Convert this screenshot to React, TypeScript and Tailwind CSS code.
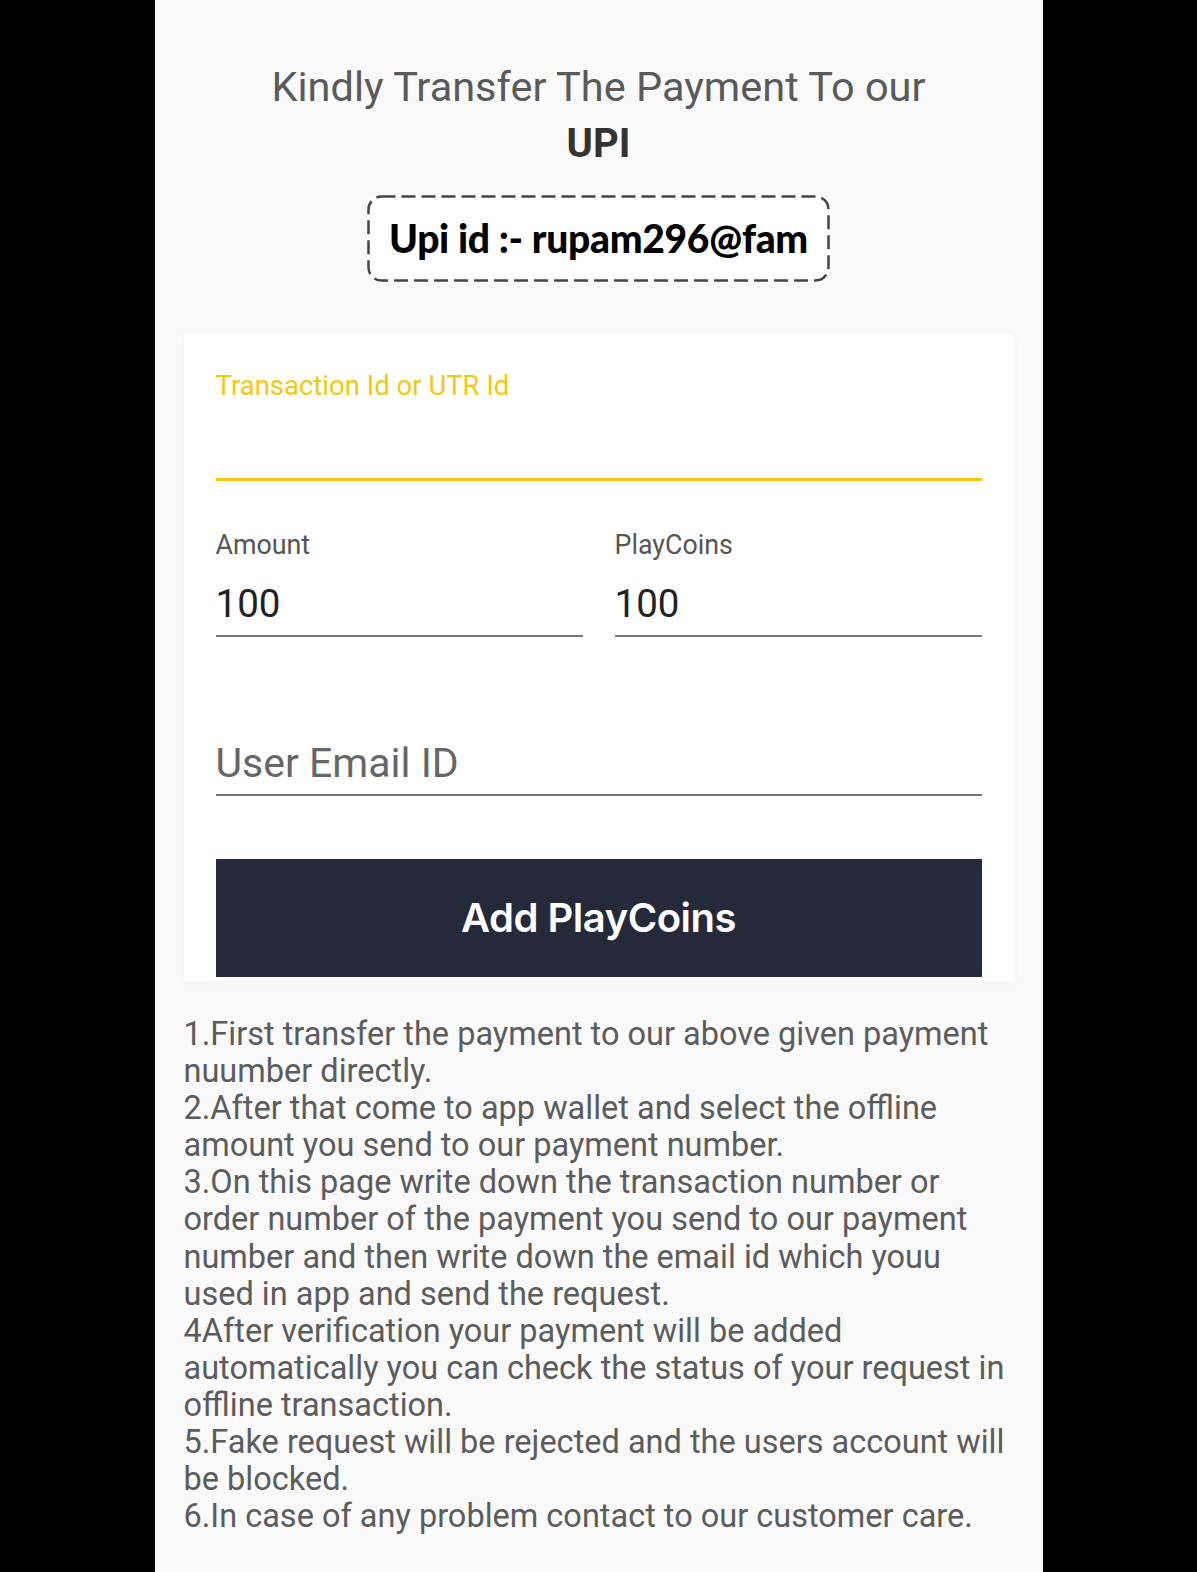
import React from 'react';

const lines = [
  '1.First transfer the payment to our above given payment',
  'nuumber directly.',
  '2.After that come to app wallet and select the offline',
  'amount you send to our payment number.',
  '3.On this page write down the transaction number or',
  'order number of the payment you send to our payment',
  'number and then write down the email id which youu',
  'used in app and send the request.',
  '4After verification your payment will be added',
  'automatically you can check the status of your request in',
  'offline transaction.',
  '5.Fake request will be rejected and the users account will',
  'be blocked.',
  '6.In case of any problem contact to our customer care.',
];

function DashedBox({ children }: { children: React.ReactNode }) {
  return (
    <div className="relative mt-[19px] h-[87px] w-[463px] rounded-[14px] bg-white flex items-center justify-center">
      <svg className="absolute inset-0 h-full w-full" viewBox="0 0 463 87" fill="none">
        <rect x="1.5" y="1.5" width="460" height="84" rx="13" stroke="#444" strokeWidth="2.5" strokeDasharray="14 6" />
      </svg>
      <span className="relative font-['Lato',sans-serif] font-black text-[39px] leading-none text-black tracking-[-0.3px]">
        {children}
      </span>
    </div>
  );
}

export default function App() {
  return (
    <div className="min-h-[1572px] w-full bg-black flex justify-center">
      <div className="w-[888px] bg-[#f9f9f9] flex flex-col items-center pt-[62px] font-['Roboto',sans-serif]">
        <h1 className="text-[41.5px] leading-[50px] text-[#5a5a5a] text-center">
          Kindly Transfer The Payment To our
        </h1>
        <div className="text-[40px] leading-[64px] font-bold text-[#333] text-center">UPI</div>

        <DashedBox>Upi id :- rupam296@fam</DashedBox>

        <div className="mt-[52px] w-[830px] bg-white shadow-[0_0_6px_rgba(0,0,0,0.04)] px-[32px] pt-[35px] pb-[4px]">
          <label className="block text-[27.5px] leading-[34px] text-[#f2c811]">Transaction Id or UTR Id</label>
          <div className="h-[78px] border-b-[3px] border-[#f4c70f]" />

          <div className="mt-[47px] grid grid-cols-2 gap-[32px]">
            <div>
              <div className="text-[26.8px] leading-[34px] text-[#555]">Amount</div>
              <div className="mt-[20px] h-[55px] border-b-2 border-[#777] text-[38.5px] leading-[44px] text-[#222]">100</div>
            </div>
            <div>
              <div className="text-[26.8px] leading-[34px] text-[#555]">PlayCoins</div>
              <div className="mt-[20px] h-[55px] border-b-2 border-[#777] text-[38.5px] leading-[44px] text-[#222]">100</div>
            </div>
          </div>

          <div className="mt-[101px] h-[58px] border-b-2 border-[#777] text-[41px] leading-[50px] text-[#666]">
            User Email ID
          </div>

          <button className="mt-[63px] w-full h-[118px] bg-[#252a3b] text-white text-[40px] font-semibold font-['Inter',sans-serif] tracking-[-0.5px]">
            Add PlayCoins
          </button>
        </div>

        <div className="mt-[35px] w-[830px] text-[32.5px] leading-[37.1px] text-[#5c5c5c]">
          {lines.map((s, i) => (
            <div key={i} className="whitespace-nowrap">{s}</div>
          ))}
        </div>
      </div>
    </div>
  );
}
